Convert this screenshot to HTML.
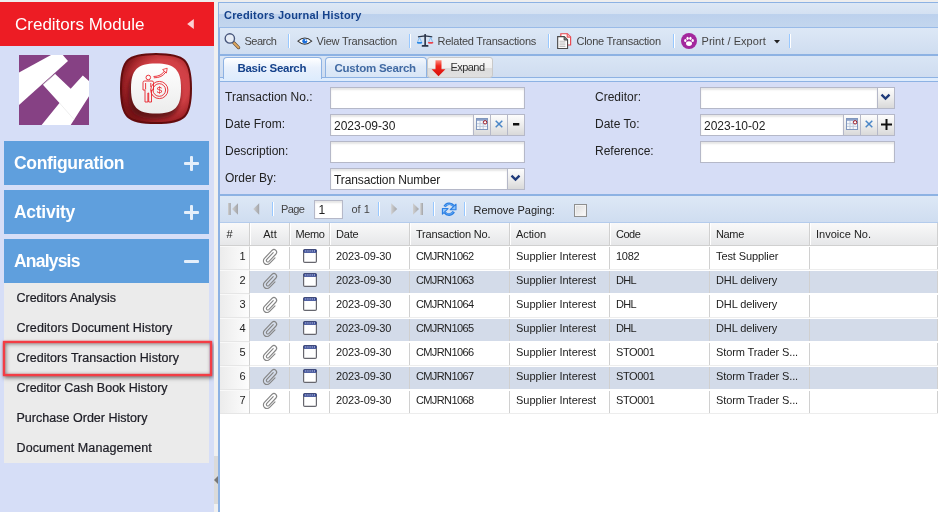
<!DOCTYPE html>
<html><head><meta charset="utf-8"><title>Creditors Journal History</title>
<style>
*{box-sizing:border-box;margin:0;padding:0}
html,body{width:938px;height:512px;overflow:hidden;background:#eeeeee;font-family:"Liberation Sans",sans-serif;}
.abs{position:absolute}
#side,#split,#main{will-change:transform}
svg{position:absolute;overflow:visible}
#side{left:0;top:2px;width:214px;height:510px;background:#d6def7}
#sidehd{left:0;top:0;width:214px;height:44px;background:#ed1c24;color:#fff;font-size:17px;line-height:46px;padding-left:15px;letter-spacing:0px;white-space:nowrap}
.acc{left:4px;width:205px;height:44px;background:#5f9fdd;color:#fff;font-weight:bold;font-size:17.5px;line-height:44px;padding-left:10px;letter-spacing:-0.3px;white-space:nowrap}
.pm{position:absolute;background:#e4effb;border-radius:1px}
#list{left:4px;top:281px;width:205px;height:180px;background:#ebebeb}
.li{position:absolute;left:12.5px;font-size:12.5px;color:#1c1c24;-webkit-text-stroke:0.22px #1c1c24;line-height:16px;white-space:nowrap}
#hl{left:2.5px;top:338.6px;width:209px;height:35.2px;border:2.8px solid #f33d45;box-shadow:0 0 1.5px #f33d45,1px 2px 4px rgba(0,0,0,.5),inset 0 0 1.5px #f33d45,inset 1px 1px 4px rgba(0,0,0,.45)}
#split{left:214px;top:2px;width:4px;height:510px;background:#f0f0f0}
#main{left:218px;top:2px;width:730px;height:520px;border:1px solid #8db2e3;border-left-width:2px;background:#fff}
#phd{left:-1px;top:0;width:calc(100% + 1px);height:25px;background:linear-gradient(#dde8f5 0,#d4e1f2 44%,#bcd1ed 48%,#c3d6ee 100%);border-bottom:1px solid #99bbe8;color:#15428b;font-weight:bold;font-size:11px;line-height:24.6px;padding-left:5px;white-space:nowrap;letter-spacing:0.2px;overflow:hidden}
#tb{left:0;top:25px;width:100%;height:27px;background:linear-gradient(#dde8f6,#cfddf0);border-bottom:1px solid #8db2e3}
.tbt{position:absolute;top:6px;font-size:11px;color:#444;line-height:14px;white-space:nowrap}
.sep{position:absolute;width:2px;background:linear-gradient(90deg,#98c8ff 50%,#fff 50%)}
#tabs{left:0;top:52px;width:100%;height:27px;background:linear-gradient(#d9e5f5,#cddbef);border-top:1px solid #8db2e3;border-bottom:1px solid #8db2e3}
#tabsp{left:0;top:21px;width:100%;height:4px;background:#deecfd;border-top:1px solid #8db2e3}
.tab{position:absolute;top:1px;height:21px;border:1px solid #8db2e3;border-bottom:none;border-radius:4px 4px 0 0;font-size:11.5px;font-weight:bold;line-height:19px;white-space:nowrap}
#form{left:0;top:79px;width:100%;height:114px;background:#d6ddf6;border-bottom:2px solid #8db2e3}
.lbl{position:absolute;font-size:12px;color:#222;line-height:14px;white-space:nowrap}
.inp{position:absolute;height:22px;background:#fff;border:1px solid #b5b8c8;box-shadow:inset 0 2px 2px rgba(0,0,0,.10);font-size:12px;line-height:22px;padding-left:3px;color:#222;white-space:nowrap}
.trg{position:absolute;width:17px;height:22px;background:linear-gradient(#fdfdfd,#ededed 50%,#d9d9d9);border:1px solid #b5b8c8;border-left:none}
#pg{left:0;top:193px;width:100%;height:27px;background:linear-gradient(#dde8f6,#cfddf0);border-bottom:1px solid #b3cbec}
#gh{left:0;top:220px;width:100%;height:23px;background:linear-gradient(#f9f9f9,#e6e7e9);border-bottom:1px solid #d0d0d0}
.hc{position:absolute;top:0;height:22px;border-right:1px solid #d0d0d0;border-left:1px solid #fff;font-size:11px;color:#222;line-height:22.5px;padding-left:5px;white-space:nowrap}
.row{position:absolute;left:0;width:100%;height:24px;border-top:1px solid #fff;border-bottom:1px solid #ededed;background:#fff}
.row.alt{background:#d3dbe9;border-bottom-color:#fff}
.c{position:absolute;top:0;height:22px;border-right:1px solid #d0d0d0;font-size:11px;color:#222;line-height:19.5px;padding-left:6px;white-space:nowrap;overflow:hidden}
.num{background:linear-gradient(90deg,#ececec,#fdfdfd);text-align:right;padding-right:3.5px;padding-left:0;top:-1px;height:24px;border-top:1px solid #f9f9f9;border-bottom:1px solid #e6e6e6}
</style></head><body>
<div id="side" class="abs">
<div id="sidehd" class="abs">Creditors Module</div>
<svg style="left:187px;top:17px" width="7" height="10" viewBox="0 0 7 10"><path d="M6.8 0 V10 L0.2 5Z" fill="#fbd0d2"/></svg>
<svg style="left:19px;top:52.5px" width="70" height="70" viewBox="0 0 70 70"><rect width="70" height="70" fill="#864184"/><polygon points="0,17.6 32,0 43.8,0 49,5.9 0,50" fill="#fff"/><polygon points="36.2,19 51.7,33.7 63.8,20.6 70,25.9 70,41.2 51.7,70 22.6,70 40.5,48 23.9,29.8" fill="#fff"/><path d="M36.2 19 L23.9 29.8" stroke="#cfcfcf" stroke-width=".8"/><path d="M40.5 48 L55 64.5" stroke="#e3e3e3" stroke-width=".6"/></svg>
<svg style="left:120px;top:51px" width="72" height="71" viewBox="0 0 72 71">
<defs>
<radialGradient id="rg1" cx=".6" cy=".45" r=".62"><stop offset="0" stop-color="#e2494e"/><stop offset=".6" stop-color="#d04045"/><stop offset=".82" stop-color="#a8272c"/><stop offset="1" stop-color="#7a1418"/></radialGradient>
<linearGradient id="rg2" x1="0" y1="0" x2="0" y2="1"><stop offset="0" stop-color="#ffffff"/><stop offset="1" stop-color="#ececec"/></linearGradient>
<filter id="bl"><feGaussianBlur stdDeviation="2.2"/></filter>
<filter id="bl2"><feGaussianBlur stdDeviation=".5"/></filter>
</defs>
<path d="M36 1 C65 1 71 7 71 35.5 C71 64 65 70 36 70 C7 70 1 64 1 35.5 C1 7 7 1 36 1Z" fill="url(#rg1)" stroke="#64090d" stroke-width="2" filter="url(#bl2)"/>
<path d="M34 16 C53 16 60 22 60 41 C60 60 53 66 34 66 C15 66 8 60 8 41 C8 22 15 16 34 16Z" fill="#4a070a" opacity=".75" filter="url(#bl)"/>
<path d="M36 10.5 C55 10.5 61 17 61 35.5 C61 54 55 60.5 36 60.5 C17 60.5 11 54 11 35.5 C11 17 17 10.5 36 10.5Z" fill="url(#rg2)"/>
<g fill="none" stroke="#e8232b" stroke-width=".9" transform="translate(0,-1)">
<circle cx="28.3" cy="25.5" r="2.3"/>
<path d="M23 30.5 Q23 29 24.5 29 H32 Q33.5 29 33.5 30.5 V38 H31.5 V50 H28.7 V41 H27.9 V50 H25 V38 H23Z"/>
<path d="M25.6 31 V37.5 M30.8 31 V35"/>
<circle cx="39.3" cy="38" r="8.6"/><circle cx="39.3" cy="38" r="6.3"/>
<path d="M33.5 24.5 Q41 24.5 44.5 19 M33.8 25.8 Q42 26 45.8 20"/>
</g>
<path d="M42.6 16.6 L47.2 15.2 L46.4 20Z" fill="none" stroke="#e8232b" stroke-width=".8"/>
<text x="39.3" y="40.4" font-family="Liberation Sans" font-size="9.5" fill="#e8232b" text-anchor="middle">$</text>
</svg>
<div class="abs acc" style="top:139px;letter-spacing:-0.35px">Configuration<span class="pm" style="left:180px;top:20.5px;width:15px;height:3px"></span><span class="pm" style="left:186px;top:14.5px;width:3px;height:15px"></span></div>
<div class="abs acc" style="top:188px;letter-spacing:-0.28px">Activity<span class="pm" style="left:180px;top:20.5px;width:15px;height:3px"></span><span class="pm" style="left:186px;top:14.5px;width:3px;height:15px"></span></div>
<div class="abs acc" style="top:237px;letter-spacing:-0.8px">Analysis<span class="pm" style="left:180px;top:20.5px;width:15px;height:3px"></span></div>
<div id="list" class="abs"><div class="li" style="top:7px;letter-spacing:-0.03px">Creditors Analysis</div><div class="li" style="top:37px;letter-spacing:0.09px">Creditors Document History</div><div class="li" style="top:67px;letter-spacing:0.045px">Creditors Transaction History</div><div class="li" style="top:97px;letter-spacing:-0.015px">Creditor Cash Book History</div><div class="li" style="top:127px;letter-spacing:0.02px">Purchase Order History</div><div class="li" style="top:157px;letter-spacing:0.1px">Document Management</div></div>
<div id="hl" class="abs"></div>
</div>
<div id="split" class="abs"><div class="abs" style="left:0;top:454px;width:4px;height:48px;background:#dadada"></div><svg style="left:0;top:474px" width="4" height="8" viewBox="0 0 4 8"><path d="M4 0 V8 L0 4Z" fill="#777"/></svg></div>
<div id="main" class="abs">
<div id="phd" class="abs">Creditors Journal History</div>
<div id="tb" class="abs"><svg style="left:3.6px;top:5px" width="16.5" height="16.5" viewBox="0 0 17 17"><line x1="10" y1="10" x2="15" y2="15" stroke="#5b4a3a" stroke-width="3.4" stroke-linecap="round"/><line x1="10.3" y1="10.3" x2="15" y2="15" stroke="#e0a85e" stroke-width="2" stroke-linecap="round"/><circle cx="6" cy="5.6" r="4.8" fill="#e6ecf5" stroke="#46557a" stroke-width="1.4"/></svg>
<span class="tbt" style="left:24.5px;letter-spacing:-0.5px">Search</span>
<span class="sep" style="left:68px;top:6px;height:14px"></span><svg style="left:76.5px;top:9px" width="15.6" height="8.3" viewBox="0 0 16 9"><path d="M0.5 4.6 Q8 -2.6 15.5 4.6 Q8 11.2 0.5 4.6Z" fill="#fff" stroke="#3a3a3a" stroke-width="1.1"/><circle cx="8" cy="4.5" r="2.7" fill="#1c6fdc"/><circle cx="9" cy="3.4" r="0.9" fill="#fff"/></svg>
<span class="tbt" style="left:96.5px;letter-spacing:-0.2px">View Transaction</span>
<span class="sep" style="left:189px;top:6px;height:14px"></span><svg style="left:196.7px;top:6.4px" width="16.2" height="13.4" viewBox="0 0 17 14"><path d="M1 3 L8.5 2 L16 3" stroke="#2a3448" stroke-width="1.3" fill="none"/><rect x="7.7" y="0" width="1.7" height="12" fill="#2a3448"/><rect x="5" y="11.6" width="7" height="1.8" rx=".6" fill="#2a3448"/><path d="M2.6 3.5 L0.6 8.5 M2.6 3.5 L4.8 8.5" stroke="#6fb0ee" stroke-width=".8" fill="none"/><path d="M14.4 3.5 L12.2 8.5 M14.4 3.5 L16.4 8.5" stroke="#6fb0ee" stroke-width=".8" fill="none"/><path d="M0 8.3 H5.4 V9.6 Q2.7 11 0 9.6Z" fill="#2b8ae6"/><path d="M11.6 8.3 H17 V9.6 Q14.3 11 11.6 9.6Z" fill="#e9434d"/></svg>
<span class="tbt" style="left:217.5px;letter-spacing:-0.24px">Related Transactions</span>
<span class="sep" style="left:328px;top:6px;height:14px"></span><svg style="left:337px;top:5px" width="14.4" height="16.6" viewBox="0 0 15 17"><path d="M4 0.6 H10.8 L14.2 4 V12.4 H4Z" fill="#fff" stroke="#e8434b" stroke-width="1.2"/><path d="M10.6 0.6 V4.2 H14.2" fill="#f7b9bc" stroke="#e8434b" stroke-width="1"/><path d="M0.7 3.6 H7.6 L11 7 V16 H0.7Z" fill="#fff" stroke="#4a4a4a" stroke-width="1.2"/><path d="M7.4 3.6 V7.2 H11" fill="#777" stroke="#4a4a4a" stroke-width="1"/><path d="M2.6 8.4 H8.8 M2.6 10.3 H8.8 M2.6 12.2 H8.8 M2.6 14 H8.8" stroke="#a5a5a5" stroke-width=".8"/></svg>
<span class="tbt" style="left:356.5px;letter-spacing:-0.26px">Clone Transaction</span>
<span class="sep" style="left:453px;top:6px;height:14px"></span><svg style="left:461px;top:5px" width="16" height="16" viewBox="0 0 16 16"><circle cx="8" cy="8" r="8" fill="#a3279d"/><ellipse cx="8" cy="10.6" rx="3" ry="2.4" fill="#fff"/><ellipse cx="4.3" cy="7.6" rx="1.15" ry="1.5" fill="#fff"/><ellipse cx="6.6" cy="5.3" rx="1.15" ry="1.6" fill="#fff"/><ellipse cx="9.4" cy="5.3" rx="1.15" ry="1.6" fill="#fff"/><ellipse cx="11.7" cy="7.6" rx="1.15" ry="1.5" fill="#fff"/></svg>
<span class="tbt" style="left:481.5px;letter-spacing:0.05px">Print / Export</span><svg style="left:553.5px;top:11.5px" width="6" height="4" viewBox="0 0 6 4"><path d="M0 0 H6 L3 3.6Z" fill="#222"/></svg>
<span class="sep" style="left:569px;top:6px;height:14px"></span>
</div>
<div id="tabs" class="abs"><div id="tabsp" class="abs"></div>
<div class="tab" style="left:3px;top:1px;width:99px;padding-left:13.5px;background:linear-gradient(#ffffff,#e9f1fc 45%,#deecfd);color:#15428b;letter-spacing:-0.3px;height:22px;line-height:20.5px">Basic Search</div>
<div class="tab" style="left:104.5px;top:1px;width:102.5px;padding-left:9px;background:linear-gradient(#f4f8fd,#dfeaf8 45%,#d8e5f6);color:#416aa3;letter-spacing:-0.23px;height:20px;line-height:20.5px">Custom Search</div>
<div class="abs" style="left:206.5px;top:1px;width:66px;height:21.4px;border:1px solid #c9c9c9;border-radius:3px;background:linear-gradient(#f7f7f7 0,#f0f0f0 52%,#dcdcdc 54%,#e0e0e0);font-size:11px;color:#333;line-height:19.6px;padding-left:23px;letter-spacing:-0.55px;white-space:nowrap"><svg style="left:3px;top:1.6px" width="15" height="17" viewBox="0 0 15 17"><defs><linearGradient id="ra" x1="0" y1="0" x2="0" y2="1"><stop offset="0" stop-color="#ff8a7a"/><stop offset=".35" stop-color="#f0261c"/><stop offset="1" stop-color="#d80f0a"/></linearGradient></defs><path d="M4.5 0.3 H10.5 V9.2 H14.4 L7.5 16.3 L0.6 9.2 H4.5Z" fill="url(#ra)"/></svg>Expand</div>
</div>
<div id="form" class="abs">
<div class="lbl" style="left:5px;top:7.5px">Transaction No.:</div>
<div class="lbl" style="left:5px;top:34.5px">Date From:</div>
<div class="lbl" style="left:5px;top:61.5px">Description:</div>
<div class="lbl" style="left:5px;top:88.5px">Order By:</div>
<div class="inp" style="left:110px;top:5px;width:195px"></div>
<div class="inp" style="left:110px;top:32px;width:144px">2023-09-30</div>
<div class="trg" style="left:254px;top:32px"><svg style="left:1.6px;top:3px" width="12" height="12" viewBox="0 0 12 12"><rect x=".5" y=".5" width="11" height="11" fill="#f6f8fb" stroke="#7f96bd" stroke-width="1"/><rect x="1" y="1" width="10" height="1.8" fill="#8aa0c8"/><path d="M1 5.7 H11 M1 8.4 H11 M4 3 V11 M7.2 3 V11" stroke="#b9c6da" stroke-width=".9"/><circle cx="9.1" cy="4.3" r="1.7" fill="#fff" stroke="#9c1620" stroke-width="1"/></svg></div><div class="trg" style="left:271px;top:32px"><svg style="left:3.8px;top:5px" width="8" height="8" viewBox="0 0 8 8"><path d="M0.7 0.7 L7.3 7.3 M7.3 0.7 L0.7 7.3" stroke="#4a86c7" stroke-width="1.5" stroke-linecap="butt"/></svg></div><div class="trg" style="left:288px;top:32px"><svg style="left:4.8px;top:8.3px" width="7" height="3"><rect width="6.3" height="2.5" fill="#111"/></svg></div>
<div class="inp" style="left:110px;top:59px;width:195px"></div>
<div class="inp" style="left:110px;top:86px;width:178px;letter-spacing:-0.12px">Transaction Number</div><div class="trg" style="left:288px;top:86px"><svg style="left:2.8px;top:6.4px" width="9" height="6" viewBox="0 0 9 6"><path d="M0.5 0.6 L4.5 4.6 L8.5 0.6" fill="none" stroke="#1f3a7a" stroke-width="2.3"/></svg></div>
<div class="lbl" style="left:375px;top:7.5px">Creditor:</div>
<div class="lbl" style="left:375px;top:34.5px">Date To:</div>
<div class="lbl" style="left:375px;top:61.5px">Reference:</div>
<div class="inp" style="left:480px;top:5px;width:178px"></div><div class="trg" style="left:658px;top:5px"><svg style="left:2.8px;top:6.4px" width="9" height="6" viewBox="0 0 9 6"><path d="M0.5 0.6 L4.5 4.6 L8.5 0.6" fill="none" stroke="#1f3a7a" stroke-width="2.3"/></svg></div>
<div class="inp" style="left:480px;top:32px;width:144px">2023-10-02</div>
<div class="trg" style="left:624px;top:32px"><svg style="left:1.6px;top:3px" width="12" height="12" viewBox="0 0 12 12"><rect x=".5" y=".5" width="11" height="11" fill="#f6f8fb" stroke="#7f96bd" stroke-width="1"/><rect x="1" y="1" width="10" height="1.8" fill="#8aa0c8"/><path d="M1 5.7 H11 M1 8.4 H11 M4 3 V11 M7.2 3 V11" stroke="#b9c6da" stroke-width=".9"/><circle cx="9.1" cy="4.3" r="1.7" fill="#fff" stroke="#9c1620" stroke-width="1"/></svg></div><div class="trg" style="left:641px;top:32px"><svg style="left:3.8px;top:5px" width="8" height="8" viewBox="0 0 8 8"><path d="M0.7 0.7 L7.3 7.3 M7.3 0.7 L0.7 7.3" stroke="#4a86c7" stroke-width="1.5" stroke-linecap="butt"/></svg></div><div class="trg" style="left:658px;top:32px"><svg style="left:2.5px;top:4px" width="11" height="11"><rect x="0" y="4.5" width="11" height="2" fill="#111"/><rect x="4.5" y="0" width="2" height="11" fill="#111"/></svg></div>
<div class="inp" style="left:480px;top:59px;width:195px"></div>
</div>
<div id="pg" class="abs"><svg style="left:8px;top:7px" width="10" height="12" viewBox="0 0 10 12"><defs><linearGradient id="pgg" x1="0" y1="0" x2="1" y2="0"><stop offset="0" stop-color="#cfcfcf"/><stop offset="1" stop-color="#a2a4a8"/></linearGradient></defs><rect x="0" y="0" width="2.8" height="12" fill="url(#pgg)"/><path d="M10 0.3 V11.7 L4 6Z" fill="url(#pgg)"/></svg><svg style="left:32.6px;top:7px" width="6.4" height="12" viewBox="0 0 6.4 12"><defs><linearGradient id="pgg" x1="0" y1="0" x2="1" y2="0"><stop offset="0" stop-color="#cfcfcf"/><stop offset="1" stop-color="#a2a4a8"/></linearGradient></defs><path d="M6.2 0.3 V11.7 L0.2 6Z" fill="url(#pgg)"/></svg>
<span class="sep" style="left:52px;top:6px;height:14px"></span>
<span class="tbt" style="left:61px;letter-spacing:-0.6px">Page</span>
<div class="inp" style="left:93.5px;top:3.5px;width:29px;height:19px;line-height:18px;font-size:12px;padding-left:4px">1</div>
<span class="tbt" style="left:131.5px">of 1</span>
<span class="sep" style="left:158px;top:6px;height:14px"></span><svg style="left:171px;top:7px" width="6.4" height="12" viewBox="0 0 6.4 12"><defs><linearGradient id="pgg" x1="0" y1="0" x2="1" y2="0"><stop offset="0" stop-color="#cfcfcf"/><stop offset="1" stop-color="#a2a4a8"/></linearGradient></defs><path d="M0.2 0.3 V11.7 L6.2 6Z" fill="url(#pgg)"/></svg><svg style="left:193px;top:7px" width="10" height="12" viewBox="0 0 10 12"><defs><linearGradient id="pgg" x1="0" y1="0" x2="1" y2="0"><stop offset="0" stop-color="#cfcfcf"/><stop offset="1" stop-color="#a2a4a8"/></linearGradient></defs><path d="M0 0.3 V11.7 L6 6Z" fill="url(#pgg)"/><rect x="7.2" y="0" width="2.8" height="12" fill="url(#pgg)"/></svg>
<span class="sep" style="left:213px;top:6px;height:14px"></span><svg style="left:221.8px;top:5.8px" width="14.3" height="14.3" viewBox="0 0 14.2 14.2"><path d="M2.6 4.6 A5.2 5.2 0 0 1 11.4 3.8" fill="none" stroke="#2b7fe3" stroke-width="2.7"/><path d="M2.9 4.3 A5 5 0 0 1 10.6 3.6" fill="none" stroke="#6fb0f5" stroke-width=".9"/><path d="M13.9 2.2 V7.7 H8.2Z" fill="#8ec3fa" stroke="#2b7fe3" stroke-width="1.1" stroke-linejoin="round"/><path d="M11.6 9.6 A5.2 5.2 0 0 1 2.8 10.4" fill="none" stroke="#2b7fe3" stroke-width="2.7"/><path d="M11.3 9.9 A5 5 0 0 1 3.6 10.6" fill="none" stroke="#6fb0f5" stroke-width=".9"/><path d="M0.4 12 V6.5 H6Z" fill="#8ec3fa" stroke="#2b7fe3" stroke-width="1.1" stroke-linejoin="round"/></svg>
<span class="sep" style="left:244px;top:6px;height:14px"></span>
<span class="tbt" style="left:253.5px;top:6.7px;color:#222">Remove Paging:</span>
<div class="abs" style="left:354px;top:8px;width:13px;height:13px;border:1px solid #8e8f8f;background:linear-gradient(135deg,#dcdcdc,#fbfbfb);box-shadow:inset 0 0 0 1px #f3f3f3"></div>
</div>
<div id="gh" class="abs"><div class="hc" style="left:0px;width:30px;border-left:none;padding-left:6.5px;">#</div><div class="hc" style="left:30px;width:40px;text-align:center;padding-left:0;">Att</div><div class="hc" style="left:70px;width:40px;text-align:center;padding-left:0;letter-spacing:-0.4px;">Memo</div><div class="hc" style="left:110px;width:80px;letter-spacing:-0.2px;">Date</div><div class="hc" style="left:190px;width:100px;letter-spacing:-0.2px;">Transaction No.</div><div class="hc" style="left:290px;width:100px;letter-spacing:-0.1px;">Action</div><div class="hc" style="left:390px;width:100px;letter-spacing:-0.5px;">Code</div><div class="hc" style="left:490px;width:100px;letter-spacing:-0.35px;">Name</div><div class="hc" style="left:590px;width:128px;">Invoice No.</div></div>
<div class="row" style="top:243px"><div class="c num" style="left:0;width:30px">1</div><div class="c" style="left:30px;width:40px"><svg style="left:11.5px;top:1.5px" width="16" height="16" viewBox="0 0 16 16"><path d="M11.2 3.6 L4.6 10.6 A1.5 1.5 0 0 0 6.8 12.6 L14 5 A2.7 2.7 0 0 0 10.2 1.2 L2.4 9.4 A3.6 3.6 0 0 0 7.6 14.4 L13 8.8" fill="none" stroke="#858585" stroke-width="1.15" stroke-linecap="round"/></svg></div><div class="c" style="left:70px;width:40px"><svg style="left:12.5px;top:2px" width="14" height="14" viewBox="0 0 14 14"><rect x=".6" y=".6" width="12.8" height="12.8" rx="1.2" fill="#fff" stroke="#66666e" stroke-width="1.2"/><rect x=".6" y=".4" width="12.8" height="3.3" rx=".8" fill="#1a2f86"/><path d="M2.2 1.3 V2.7 M4.1 1.3 V2.7 M6 1.3 V2.7 M7.9 1.3 V2.7 M9.8 1.3 V2.7 M11.7 1.3 V2.7" stroke="#ffffff" stroke-width=".9"/></svg></div><div class="c" style="left:110px;width:80px;letter-spacing:-0.1px">2023-09-30</div><div class="c" style="left:190px;width:100px;letter-spacing:-0.62px">CMJRN1062</div><div class="c" style="left:290px;width:100px">Supplier Interest</div><div class="c" style="left:390px;width:100px;letter-spacing:-0.3px">1082</div><div class="c" style="left:490px;width:100px;letter-spacing:-0.1px">Test Supplier</div><div class="c" style="left:590px;width:128px"></div></div>
<div class="row alt" style="top:267px"><div class="c num" style="left:0;width:30px">2</div><div class="c" style="left:30px;width:40px"><svg style="left:11.5px;top:1.5px" width="16" height="16" viewBox="0 0 16 16"><path d="M11.2 3.6 L4.6 10.6 A1.5 1.5 0 0 0 6.8 12.6 L14 5 A2.7 2.7 0 0 0 10.2 1.2 L2.4 9.4 A3.6 3.6 0 0 0 7.6 14.4 L13 8.8" fill="none" stroke="#858585" stroke-width="1.15" stroke-linecap="round"/></svg></div><div class="c" style="left:70px;width:40px"><svg style="left:12.5px;top:2px" width="14" height="14" viewBox="0 0 14 14"><rect x=".6" y=".6" width="12.8" height="12.8" rx="1.2" fill="#fff" stroke="#66666e" stroke-width="1.2"/><rect x=".6" y=".4" width="12.8" height="3.3" rx=".8" fill="#1a2f86"/><path d="M2.2 1.3 V2.7 M4.1 1.3 V2.7 M6 1.3 V2.7 M7.9 1.3 V2.7 M9.8 1.3 V2.7 M11.7 1.3 V2.7" stroke="#ffffff" stroke-width=".9"/></svg></div><div class="c" style="left:110px;width:80px;letter-spacing:-0.1px">2023-09-30</div><div class="c" style="left:190px;width:100px;letter-spacing:-0.62px">CMJRN1063</div><div class="c" style="left:290px;width:100px">Supplier Interest</div><div class="c" style="left:390px;width:100px;letter-spacing:-0.7px">DHL</div><div class="c" style="left:490px;width:100px;letter-spacing:-0.12px">DHL delivery</div><div class="c" style="left:590px;width:128px"></div></div>
<div class="row" style="top:291px"><div class="c num" style="left:0;width:30px">3</div><div class="c" style="left:30px;width:40px"><svg style="left:11.5px;top:1.5px" width="16" height="16" viewBox="0 0 16 16"><path d="M11.2 3.6 L4.6 10.6 A1.5 1.5 0 0 0 6.8 12.6 L14 5 A2.7 2.7 0 0 0 10.2 1.2 L2.4 9.4 A3.6 3.6 0 0 0 7.6 14.4 L13 8.8" fill="none" stroke="#858585" stroke-width="1.15" stroke-linecap="round"/></svg></div><div class="c" style="left:70px;width:40px"><svg style="left:12.5px;top:2px" width="14" height="14" viewBox="0 0 14 14"><rect x=".6" y=".6" width="12.8" height="12.8" rx="1.2" fill="#fff" stroke="#66666e" stroke-width="1.2"/><rect x=".6" y=".4" width="12.8" height="3.3" rx=".8" fill="#1a2f86"/><path d="M2.2 1.3 V2.7 M4.1 1.3 V2.7 M6 1.3 V2.7 M7.9 1.3 V2.7 M9.8 1.3 V2.7 M11.7 1.3 V2.7" stroke="#ffffff" stroke-width=".9"/></svg></div><div class="c" style="left:110px;width:80px;letter-spacing:-0.1px">2023-09-30</div><div class="c" style="left:190px;width:100px;letter-spacing:-0.62px">CMJRN1064</div><div class="c" style="left:290px;width:100px">Supplier Interest</div><div class="c" style="left:390px;width:100px;letter-spacing:-0.7px">DHL</div><div class="c" style="left:490px;width:100px;letter-spacing:-0.12px">DHL delivery</div><div class="c" style="left:590px;width:128px"></div></div>
<div class="row alt" style="top:315px"><div class="c num" style="left:0;width:30px">4</div><div class="c" style="left:30px;width:40px"><svg style="left:11.5px;top:1.5px" width="16" height="16" viewBox="0 0 16 16"><path d="M11.2 3.6 L4.6 10.6 A1.5 1.5 0 0 0 6.8 12.6 L14 5 A2.7 2.7 0 0 0 10.2 1.2 L2.4 9.4 A3.6 3.6 0 0 0 7.6 14.4 L13 8.8" fill="none" stroke="#858585" stroke-width="1.15" stroke-linecap="round"/></svg></div><div class="c" style="left:70px;width:40px"><svg style="left:12.5px;top:2px" width="14" height="14" viewBox="0 0 14 14"><rect x=".6" y=".6" width="12.8" height="12.8" rx="1.2" fill="#fff" stroke="#66666e" stroke-width="1.2"/><rect x=".6" y=".4" width="12.8" height="3.3" rx=".8" fill="#1a2f86"/><path d="M2.2 1.3 V2.7 M4.1 1.3 V2.7 M6 1.3 V2.7 M7.9 1.3 V2.7 M9.8 1.3 V2.7 M11.7 1.3 V2.7" stroke="#ffffff" stroke-width=".9"/></svg></div><div class="c" style="left:110px;width:80px;letter-spacing:-0.1px">2023-09-30</div><div class="c" style="left:190px;width:100px;letter-spacing:-0.62px">CMJRN1065</div><div class="c" style="left:290px;width:100px">Supplier Interest</div><div class="c" style="left:390px;width:100px;letter-spacing:-0.7px">DHL</div><div class="c" style="left:490px;width:100px;letter-spacing:-0.12px">DHL delivery</div><div class="c" style="left:590px;width:128px"></div></div>
<div class="row" style="top:339px"><div class="c num" style="left:0;width:30px">5</div><div class="c" style="left:30px;width:40px"><svg style="left:11.5px;top:1.5px" width="16" height="16" viewBox="0 0 16 16"><path d="M11.2 3.6 L4.6 10.6 A1.5 1.5 0 0 0 6.8 12.6 L14 5 A2.7 2.7 0 0 0 10.2 1.2 L2.4 9.4 A3.6 3.6 0 0 0 7.6 14.4 L13 8.8" fill="none" stroke="#858585" stroke-width="1.15" stroke-linecap="round"/></svg></div><div class="c" style="left:70px;width:40px"><svg style="left:12.5px;top:2px" width="14" height="14" viewBox="0 0 14 14"><rect x=".6" y=".6" width="12.8" height="12.8" rx="1.2" fill="#fff" stroke="#66666e" stroke-width="1.2"/><rect x=".6" y=".4" width="12.8" height="3.3" rx=".8" fill="#1a2f86"/><path d="M2.2 1.3 V2.7 M4.1 1.3 V2.7 M6 1.3 V2.7 M7.9 1.3 V2.7 M9.8 1.3 V2.7 M11.7 1.3 V2.7" stroke="#ffffff" stroke-width=".9"/></svg></div><div class="c" style="left:110px;width:80px;letter-spacing:-0.1px">2023-09-30</div><div class="c" style="left:190px;width:100px;letter-spacing:-0.62px">CMJRN1066</div><div class="c" style="left:290px;width:100px">Supplier Interest</div><div class="c" style="left:390px;width:100px;letter-spacing:-0.4px">STO001</div><div class="c" style="left:490px;width:100px;letter-spacing:-0.1px">Storm Trader S...</div><div class="c" style="left:590px;width:128px"></div></div>
<div class="row alt" style="top:363px"><div class="c num" style="left:0;width:30px">6</div><div class="c" style="left:30px;width:40px"><svg style="left:11.5px;top:1.5px" width="16" height="16" viewBox="0 0 16 16"><path d="M11.2 3.6 L4.6 10.6 A1.5 1.5 0 0 0 6.8 12.6 L14 5 A2.7 2.7 0 0 0 10.2 1.2 L2.4 9.4 A3.6 3.6 0 0 0 7.6 14.4 L13 8.8" fill="none" stroke="#858585" stroke-width="1.15" stroke-linecap="round"/></svg></div><div class="c" style="left:70px;width:40px"><svg style="left:12.5px;top:2px" width="14" height="14" viewBox="0 0 14 14"><rect x=".6" y=".6" width="12.8" height="12.8" rx="1.2" fill="#fff" stroke="#66666e" stroke-width="1.2"/><rect x=".6" y=".4" width="12.8" height="3.3" rx=".8" fill="#1a2f86"/><path d="M2.2 1.3 V2.7 M4.1 1.3 V2.7 M6 1.3 V2.7 M7.9 1.3 V2.7 M9.8 1.3 V2.7 M11.7 1.3 V2.7" stroke="#ffffff" stroke-width=".9"/></svg></div><div class="c" style="left:110px;width:80px;letter-spacing:-0.1px">2023-09-30</div><div class="c" style="left:190px;width:100px;letter-spacing:-0.62px">CMJRN1067</div><div class="c" style="left:290px;width:100px">Supplier Interest</div><div class="c" style="left:390px;width:100px;letter-spacing:-0.4px">STO001</div><div class="c" style="left:490px;width:100px;letter-spacing:-0.1px">Storm Trader S...</div><div class="c" style="left:590px;width:128px"></div></div>
<div class="row" style="top:387px"><div class="c num" style="left:0;width:30px">7</div><div class="c" style="left:30px;width:40px"><svg style="left:11.5px;top:1.5px" width="16" height="16" viewBox="0 0 16 16"><path d="M11.2 3.6 L4.6 10.6 A1.5 1.5 0 0 0 6.8 12.6 L14 5 A2.7 2.7 0 0 0 10.2 1.2 L2.4 9.4 A3.6 3.6 0 0 0 7.6 14.4 L13 8.8" fill="none" stroke="#858585" stroke-width="1.15" stroke-linecap="round"/></svg></div><div class="c" style="left:70px;width:40px"><svg style="left:12.5px;top:2px" width="14" height="14" viewBox="0 0 14 14"><rect x=".6" y=".6" width="12.8" height="12.8" rx="1.2" fill="#fff" stroke="#66666e" stroke-width="1.2"/><rect x=".6" y=".4" width="12.8" height="3.3" rx=".8" fill="#1a2f86"/><path d="M2.2 1.3 V2.7 M4.1 1.3 V2.7 M6 1.3 V2.7 M7.9 1.3 V2.7 M9.8 1.3 V2.7 M11.7 1.3 V2.7" stroke="#ffffff" stroke-width=".9"/></svg></div><div class="c" style="left:110px;width:80px;letter-spacing:-0.1px">2023-09-30</div><div class="c" style="left:190px;width:100px;letter-spacing:-0.62px">CMJRN1068</div><div class="c" style="left:290px;width:100px">Supplier Interest</div><div class="c" style="left:390px;width:100px;letter-spacing:-0.4px">STO001</div><div class="c" style="left:490px;width:100px;letter-spacing:-0.1px">Storm Trader S...</div><div class="c" style="left:590px;width:128px"></div></div>

</div>
</body></html>
